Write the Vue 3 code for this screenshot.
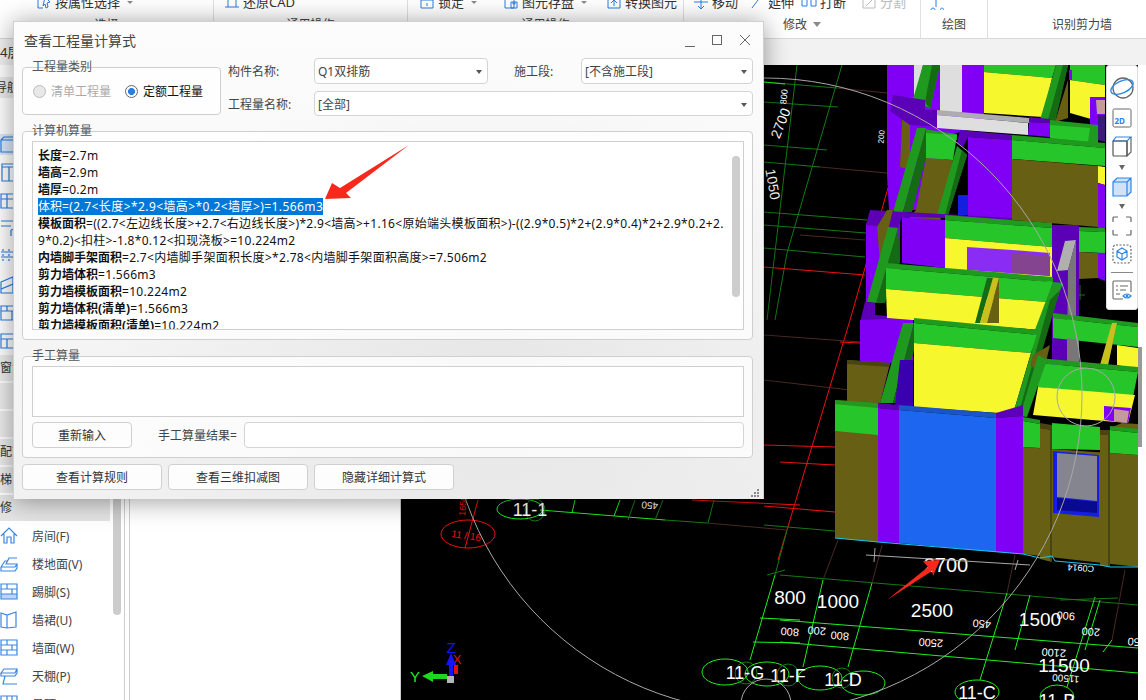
<script setup>
const sections = [
  { w: 214, title: '选择', cls: 'p1', tools: [{ t: '按属性选择', caret: true, ic: 'M2 2h5M2 2v12h5M9 3l5 5-3 1 1 4-2 1-1-4-2 2z' }] },
  { w: 194, title: '通用操作', cls: 'p2', tools: [{ t: '还原CAD', ic: 'M1 4h14M4 1v12M1 13h14M12 4v9' }] },
  { w: 276, title: '通用操作', cls: 'p3', tools: [
    { t: '锁定', caret: true, ic: 'M2 6h12v8H2zM5 6V3h6v3M8 9v3' },
    { t: '图元存盘', caret: true, ic: 'M2 2h9v12H2zM8 8h6v6H8zM10 8v2h2V8' },
    { t: '转换图元', ic: 'M2 4h12v10H2zM5 9l3-3 3 3M8 6v6' }
  ] },
  { w: 237, title: '修改', cls: 'p4', caret: true, tools: [
    { t: '移动', ic: 'M8 1v14M5 12l3 3 3-3M5 4l3-3 3 3M1 8h14' },
    { t: '延伸', ic: 'M3 14 12 2M12 2h3' },
    { t: '打断', ic: 'M1 4h5v8H1zM10 4h5v8h-5z' },
    { t: '分割', ic: 'M2 3h12v11H2zM5 12l7-7', off: true }
  ] },
  { w: 67, title: '绘图', cls: 'p5', tools: [{ t: '', ic: 'M3 14a2 2 0 1 0 .1 0M6 13V2M12 14a1.5 1.5 0 1 0 .1 0' }] },
  { w: 158, title: '识别剪力墙', cls: 'p6', tools: [] }
]

const iconRows = [
  'M1 5 4 2h13v15H1zM1 5h16',
  'M2 1h14v17H2zM2 4h14M9 4v14',
  'M1 3h16v14H1zM1 8h16M7 3v14',
  'M1 2h14v8l-4 1M1 7h10M11 11v6',
  'M3 2v2M3 7v2M3 12v2M9 2v2M9 7v2M9 12v2M1 5h16M1 10h16',
  'M1 7l12-5v7L1 14zM1 14v4h12V9',
  'M1 3h16v14H1zM1 8h16M7 3v5M12 8v9',
  'M1 3h16v14H1zM1 8h16M7 8v9'
]
const groupRows = [
  { t: '门窗洞' }, { t: '' }, { t: '' }, { t: '装配式' }, { t: '楼梯' }, { t: '装修', on: true }
]
const items = [
  { t: '房间(F)', d: 'M1 10 9 2l8 8M4 8v9h3v-6h4v6h3V8' },
  { t: '楼地面(V)', d: 'M1 13h14l2-3H6L9 4h8M1 13v4h14l2-3v-4M1 13l4-6h2' },
  { t: '踢脚(S)', d: 'M1 2h16v15H1zM1 7h16M1 12h16M7 2v5M12 7v5', fill: true },
  { t: '墙裙(U)', d: 'M1 3l6 2 9-3v15l-9 1-6-1zM7 5v13' },
  { t: '墙面(W)', d: 'M1 2h16v15H1zM1 7h16M1 12h16M7 2v5M12 7v5M7 12v5' },
  { t: '天棚(P)', d: 'M1 7l3-4h13l-2 4zM1 7v3h14l2-3V3M5 10l-2 8h14' },
  { t: '吊顶(K)', d: 'M1 2h16v15H1zM1 7h16M7 2v5M12 2v5' }
]

const calcLines = [
  { k: '长度', v: '=2.7m' },
  { k: '墙高', v: '=2.9m' },
  { k: '墙厚', v: '=0.2m' },
  { k: '体积', v: '=(2.7<长度>*2.9<墙高>*0.2<墙厚>)=1.566m3', sel: true },
  { k: '模板面积', v: '=((2.7<左边线长度>+2.7<右边线长度>)*2.9<墙高>+1.16<原始端头模板面积>)-((2.9*0.5)*2+(2.9*0.4)*2+2.9*0.2+2.' },
  { k: '', v: '9*0.2)<扣柱>-1.8*0.12<扣现浇板>=10.224m2' },
  { k: '内墙脚手架面积', v: '=2.7<内墙脚手架面积长度>*2.78<内墙脚手架面积高度>=7.506m2' },
  { k: '剪力墙体积', v: '=1.566m3' },
  { k: '剪力墙模板面积', v: '=10.224m2' },
  { k: '剪力墙体积(清单)', v: '=1.566m3' },
  { k: '剪力墙模板面积(清单)', v: '=10.224m2' }
]

const G = '#26c62a', GD = '#1f9a1f', GK = '#146b14', Y = '#f7f72e', O = '#665f14', OD = '#4a4510'
const P = '#7f00f5', PD = '#5c00b8', W = '#dedede'

// page coordinates, painted back to front
const polys = [
  [P, '887,65 984,65 984,125 950,135 930,210 889,210 887,176'],
  [W, '914,65 923,65 915,98 914,98'],
  [O, '903,98 915,97 915,125 910,125 910,170 900,167'],
  [GD, '923,65 940,65 930,109 913,99'],
  [GK, '932,65 940,65 930,109 925,102'],
  [W, '940,65 962,65 962,112 940,112'],
  [G, '984,65 1056,65 1052,78 984,72'],
  [Y, '984,72 1052,78 1043,117 984,113'],
  [GD, '1056,65 1068,65 1055,122 1040,120'],
  [GK, '1063,65 1068,65 1055,122 1048,120'],
  [O, '1068,80 1068,118 1055,122'],
  [G, '1070,65 1105,65 1105,85 1070,80'],
  [Y, '1070,80 1105,85 1105,123 1070,113'],
  [P, '1069,70 1072,70 1072,80 1069,80'],
  [P, '1090,97 1105,97 1105,140 1090,135'],
  ['#c49a9a', '1096,100 1105,100 1105,114 1097,114'],
  ['#3a1a7a', '1098,115 1105,115 1105,142 1098,140'],
  [PD, '893,95 925,100 925,110 938,110 938,127 910,125 890,111'],
  ['#adadad', '937,110 1029,118 1029,123 937,115'],
  [W, '937,115 1028,123 1028,135 937,128'],
  [PD, '1029,117 1050,119 1050,123 1029,122'],
  [P, '1029,122 1050,123 1050,137 1028,135'],
  [GD, '1050,120 1098,125 1098,145 1050,140'],
  [G, '1050,125 1090,128 1088,142 1050,138'],
  [PD, '960,130 1012,135 1012,140 968,137 963,147 957,143'],
  [P, '968,137 1012,140 1012,225 968,222'],
  [GD, '1012,135 1105,143 1105,148 1012,140'],
  [G, '1012,140 1105,148 1105,166 1012,159'],
  [O, '1012,159 1098,166 1098,227 1012,220'],
  [Y, '1098,166 1105,167 1105,185 1098,183'],
  [P, '1098,183 1105,185 1105,281 1098,278'],
  [O, '916,210 926,158 953,160 940,222 905,222'],
  [GD, '917,128 957,134 957,140 926,133 926,158 916,158'],
  [G, '926,133 957,135 953,160 926,158'],
  [GD, '917,128 926,128 903,212 893,212'],
  [GK, '926,128 926,157 912,212 903,212'],
  [GD, '957,146 967,155 948,215 937,215'],
  [GK, '962,150 967,155 948,215 945,215'],
  ['#1420e0', '958,195 968,195 968,215 958,215'],
  [P, '866,223 900,213 900,263 887,263 877,303 866,302'],
  [PD, '870,210 1012,218 1012,222 945,218 902,217 898,228 866,225'],
  [O, '877,227 887,210 893,210 880,263'],
  [P, '902,217 945,220 945,268 902,263'],
  [GD, '945,215 1052,223 1052,228 945,220'],
  [G, '945,220 1052,228 1052,247 945,238'],
  [Y, '945,238 1052,247 1052,282 945,270'],
  ['#8b2cf5', '967,247 1012,250 1050,253 1050,276 967,270'],
  ['#84448f', '1012,253 1050,256 1050,276 1012,273'],
  [PD, '1052,225 1079,225 1079,365 1052,365'],
  ['#b0b0b0', '1065,241 1076,240 1068,270 1057,271'],
  ['#777777', '1068,270 1076,240 1076,363 1067,363'],
  [GD, '1079,227 1105,228 1105,232 1079,231'],
  [G, '1079,231 1105,232 1105,253 1079,252'],
  [O, '1079,252 1098,253 1098,278 1079,279'],
  [GD, '888,227 898,228 880,303 867,302'],
  [GK, '898,228 900,262 885,303 876,303'],
  [PD, '865,302 875,303 875,315 913,318 913,322 860,322'],
  [P, '860,320 913,318 913,360 890,363 880,403 860,403'],
  [GD, '886,263 1053,277 1053,282 886,268'],
  [G, '886,268 1053,282 1047,302 886,289'],
  [Y, '886,289 1047,302 1040,330 887,318'],
  [GK, '987,278 993,278 980,323 975,323'],
  ['#c9c020', '993,278 999,278 987,323 980,323'],
  [O, '999,278 999,323 987,323'],
  [GD, '1053,282 1063,283 1043,335 1033,335'],
  [O, '847,360 890,363 880,403 847,402'],
  [OD, '847,360 890,363 889,367 847,364'],
  [GD, '903,323 914,323 893,403 880,403'],
  [GK, '914,323 914,350 900,403 893,403'],
  ['#3a00b0', '900,360 913,360 913,407 895,405'],
  [GD, '914,318 1038,330 1038,335 914,323'],
  [G, '914,323 1038,335 1031,353 914,343'],
  [Y, '914,343 1031,353 1013,414 914,407'],
  [GD, '1038,330 1053,282 1060,290 1020,416 1013,414'],
  [GK, '1050,300 1060,290 1023,416 1018,416'],
  [GD, '1053,313 1138,323 1138,327 1053,318'],
  [G, '1053,318 1138,327 1138,347 1053,338'],
  [O, '1100,365 1117,323 1108,365'],
  ['#c9c020', '1112,323 1117,323 1108,365 1100,365'],
  [Y, '1117,345 1138,348 1138,370 1117,365'],
  ['#777777', '1067,338 1079,340 1079,365 1067,365'],
  [O, '1033,355 1050,345 1043,375 1030,365'],
  [GD, '1038,358 1138,367 1138,372 1038,363'],
  [G, '1038,363 1138,372 1133,397 1038,387'],
  [Y, '1038,387 1135,395 1128,423 1033,415'],
  [P, '1104,406 1131,408 1128,423 1104,420'],
  ['#c49a9a', '1114,409 1129,411 1127,423 1114,421'],
  [GD, '1038,355 1047,360 1027,417 1020,416'],
  [O, '1122,423 1138,424 1138,432 1110,428'],
  [O, '835,400 878,403 878,542 835,538'],
  [GD, '835,400 878,403 878,408 835,404'],
  [G, '835,404 878,408 878,435 835,431'],
  [PD, '878,403 899,405 899,410 878,408'],
  [P, '878,408 899,410 899,543 878,542'],
  ['#1a55c8', '899,405 996,413 996,418 899,410'],
  ['#1c66f0', '899,410 996,418 996,552 899,543'],
  [PD, '996,413 1023,405 1023,416 996,418'],
  [P, '996,418 1023,416 1023,554 996,552'],
  [O, '1023,447 1138,455 1138,567 1023,554'],
  [GD, '1023,417 1040,420 1040,424 1023,421'],
  [G, '1023,421 1040,424 1040,448 1023,447'],
  [G, '1052,423 1100,427 1100,450 1052,449'],
  [GD, '1110,426 1138,429 1138,433 1110,430'],
  [G, '1110,430 1138,433 1138,455 1110,453'],
  [OD, '1040,423 1052,425 1052,430 1040,428'],
  [O, '1040,428 1052,430 1052,562 1040,559'],
  [OD, '1050,430 1052,430 1052,562 1050,562'],
  [OD, '1100,430 1110,430 1110,435 1100,435'],
  [O, '1100,435 1110,435 1110,567 1100,565'],
  [OD, '1108,435 1110,435 1110,567 1108,567'],
  ['#1420e0', '1053,451 1099,455 1099,517 1053,513'],
  ['#85858f', '1057,453 1097,456 1097,501 1057,497'],
  ['#0a0a90', '1057,498 1097,502 1097,513 1057,510']
]

const dark = '#157a15', bright = '#1ef01e', brown = '#4a2a20', red = '#f01010'
const lines = [
  [dark, 764, 82, 837, 88], [brown, 837, 88, 887, 93], [bright, 764, 82, 785, 84],
  [dark, 764, 102, 838, 107], [dark, 764, 145, 827, 150],
  [dark, 764, 162, 820, 167], [brown, 820, 167, 887, 173],
  [dark, 797, 65, 767, 320], [dark, 842, 65, 787, 253], [dark, 787, 253, 775, 320],
  [dark, 764, 212, 867, 220], [dark, 764, 225, 866, 233], [brown, 800, 235, 865, 240],
  [dark, 764, 248, 865, 257], [red, 764, 267, 865, 275],
  [red, 888, 188, 850, 320], [red, 850, 320, 807, 463], [red, 807, 463, 778, 560],
  [brown, 764, 335, 860, 342], [red, 840, 342, 860, 343],
  [brown, 764, 380, 850, 390], [red, 764, 445, 835, 447], [red, 780, 462, 835, 465],
  [red, 764, 506, 835, 512], [dark, 764, 525, 835, 531], [red, 692, 500, 800, 505],
  [red, 478, 500, 465, 548],
  [bright, 540, 510, 665, 520], [dark, 665, 520, 707, 523], [brown, 707, 523, 787, 530],
  [bright, 575, 500, 572, 513], [bright, 620, 500, 614, 516], [dark, 635, 500, 628, 520], [dark, 663, 500, 655, 520],
  [dark, 714, 500, 708, 523], [dark, 787, 530, 775, 575], [bright, 775, 575, 750, 660],
  [dark, 767, 575, 785, 570], [bright, 760, 618, 800, 620], [bright, 753, 642, 800, 643],
  [dark, 780, 575, 1138, 605], [bright, 780, 620, 1138, 648], [bright, 780, 642, 1138, 673],
  [bright, 823, 580, 803, 667], [bright, 872, 583, 848, 667], [brown, 838, 540, 823, 580], [brown, 882, 545, 872, 583],
  [brown, 1015, 555, 1007, 593], [bright, 1007, 593, 980, 680], [bright, 1030, 595, 1015, 650],
  [bright, 1095, 597, 1067, 687], [bright, 1100, 600, 1085, 650], [brown, 1125, 570, 1112, 640], [bright, 1112, 640, 1103, 652],
  [dark, 1060, 600, 1118, 598], [dark, 1080, 285, 1080, 300], [dark, 1075, 295, 1085, 295],
  [bright, 1055, 350, 1053, 365], [red, 1060, 362, 1082, 364]
]

const labels = [
  { t: '2700', x: 946, y: 572, s: 20 },
  { t: '800', x: 790, y: 604, s: 19 },
  { t: '1000', x: 838, y: 608, s: 19 },
  { t: '2500', x: 932, y: 617, s: 19 },
  { t: '1500', x: 1040, y: 626, s: 19 },
  { t: '11500', x: 1064, y: 672, s: 19 },
  { t: '800', x: 790, y: 628, s: 11, r: 184 },
  { t: '200', x: 817, y: 627, s: 11, r: 184 },
  { t: '800', x: 840, y: 632, s: 11, r: 184 },
  { t: '2500', x: 931, y: 639, s: 11, r: 184 },
  { t: '450', x: 982, y: 620, s: 11, r: 184 },
  { t: '900', x: 1066, y: 612, s: 11, r: 184 },
  { t: '200', x: 1091, y: 628, s: 11, r: 184 },
  { t: '50', x: 1134, y: 638, s: 11, r: 184 },
  { t: '2100', x: 1054, y: 649, s: 11, r: 184 },
  { t: '11500', x: 1066, y: 675, s: 10, r: 184 },
  { t: 'C0914', x: 1081, y: 565, s: 9, r: 184 },
  { t: '450', x: 650, y: 502, s: 10, r: 184 },
  { t: '2700', x: 785, y: 125, s: 14, r: -68 },
  { t: '1050', x: 768, y: 185, s: 14, r: 80 },
  { t: '800', x: 787, y: 97, s: 9, r: -85 },
  { t: '200', x: 884, y: 137, s: 8, r: -85 }
]

const ovals = [
  [bright, 520, 509, 23, 10], [dark, 535, 510, 10, 11], [red, 468, 534, 27, 14],
  [bright, 725, 672, 23, 13], [dark, 746, 673, 11, 11], [bright, 767, 674, 22, 12], [dark, 788, 675, 11, 11],
  [bright, 820, 678, 22, 12], [dark, 842, 678, 10, 10], [bright, 863, 683, 22, 12], [bright, 977, 692, 22, 12], [bright, 1057, 697, 17, 12]
]
const tags = [
  { t: '11-1', x: 530, y: 516 }, { t: '11-G', x: 745, y: 679 }, { t: '11-F', x: 788, y: 682 },
  { t: '11-D', x: 843, y: 686 }, { t: '11-C', x: 977, y: 699 }, { t: '11-B', x: 1057, y: 707 }
]
</script>

<template>
  <div class="page">
    <header class="ribbon">
      <section v-for="s in sections" :key="s.cls" class="rb-sec" :class="s.cls" :style="{ width: s.w + 'px' }">
        <div class="rb-tools">
          <div v-for="tool in s.tools" :key="tool.t" class="rb-tool" :class="{ off: tool.off }">
            <svg width="16" height="16" viewBox="0 0 16 16" fill="none" :stroke="tool.off ? '#bbb' : '#2b7de0'">
              <path :d="tool.ic" />
            </svg>
            <span>{{ tool.t }}</span>
            <i v-if="tool.caret" class="caret small"></i>
          </div>
        </div>
        <div class="rb-title">{{ s.title }}<i v-if="s.caret" class="caret"></i></div>
      </section>
    </header>

    <div class="body">
      <aside class="side">
        <div class="side-list">
          <div class="floor">4层</div>
          <div class="nav">导航</div>
          <div class="side-icons">
            <div v-for="(d, n) in iconRows" :key="n" class="icon-row" :class="{ active: n === 0 }">
              <svg width="18" height="20" viewBox="0 0 18 20" fill="none" stroke="#2b7de0" stroke-width="1.2">
                <path :d="d" />
              </svg>
            </div>
          </div>
          <div v-for="(g, i) in groupRows" :key="i" class="group-row" :class="{ on: g.on }">{{ g.t }}</div>
          <div v-for="it in items" :key="it.t" class="item">
            <svg width="18" height="20" viewBox="0 0 18 20" fill="none" stroke="#3b86e0" stroke-width="1.2">
              <path v-if="it.fill" d="M1 12h16v5H1z" fill="#bcd6f5" stroke="none" />
              <path :d="it.d" />
            </svg>
            <span>{{ it.t }}</span>
          </div>
        </div>
        <div class="side-track"><div class="side-thumb"></div></div>
      </aside>
      <div class="panel"></div>
      <div class="view">
        <div class="view-strip"></div>
        <div class="view-row">
          <svg class="cad" width="737" height="635" viewBox="401 65 737 635">
            <rect x="401" y="65" width="737" height="635" fill="#000" />
            <line v-for="(l, i) in lines" :key="'l' + i" :x1="l[1]" :y1="l[2]" :x2="l[3]" :y2="l[4]" :stroke="l[0]" />
            <ellipse v-for="(o, i) in ovals" :key="'o' + i" :cx="o[1]" :cy="o[2]" :rx="o[3]" :ry="o[4]" :stroke="o[0]" fill="none" />
            <text v-for="(t, i) in labels" :key="'t' + i" class="cad-num" :font-size="t.s" :x="t.x" :y="t.y"
              :transform="t.r ? `rotate(${t.r} ${t.x} ${t.y})` : null">{{ t.t }}</text>
            <text v-for="t in tags" :key="t.t" class="cad-num" font-size="18" :x="t.x" :y="t.y">{{ t.t }}</text>
            <text class="cad-red" font-size="10" x="451" y="537" transform="rotate(8 451 537)">11 / 16</text>
            <text class="cad-red" font-size="9" x="465" y="516" transform="rotate(-85 465 516)">1650</text>
            <polygon v-for="(p, i) in polys" :key="'p' + i" :fill="p[0]" :points="p[1]" />
            <polyline points="835,538 878,542 1023,554 1040,558 1052,556 1055,561 1100,565 1110,567 1138,567" fill="none" stroke="#19c8f0" />
            <circle cx="765" cy="395" r="317" fill="none" stroke="#a8a8a8" />
            <circle cx="1086" cy="397" r="29" fill="none" stroke="#a8a8a8" />
            <circle cx="766" cy="704" r="25" fill="none" stroke="#a8a8a8" />
            <path d="M866 555 L1030 565 M875 548 L874 562 M1018 560 L1015 570" stroke="#a8a8a8" fill="none" />
            <g class="axes">
              <text x="451" y="653" fill="#1414ff" font-size="15" text-anchor="middle">Z</text>
              <text x="457" y="664" fill="#e01010" font-size="13" text-anchor="middle">X</text>
              <text x="415" y="682" fill="#1ef01e" font-size="15" text-anchor="middle">Y</text>
              <path d="M451 653l5 12h-3v11h-4v-11h-3z" fill="#1414ff" />
              <path d="M454 665h4v9h-4z" fill="#e01010" />
              <path d="M422 676l11-5v3h14v5h-14v3z" fill="#1ed81e" />
              <rect x="447" y="676" width="7" height="7" fill="#b5b5b5" />
            </g>
            <polygon points="940,560 923,561 928,567 887,600 932,571 933,576" fill="#f8291c" />
          </svg>
          <div class="view-scroll"><div class="view-thumb"></div></div>
        </div>
      </div>
    </div>

    <div class="toolbar">
      <svg width="26" height="24" viewBox="0 0 26 24" fill="none" stroke-width="1.3">
        <circle cx="14" cy="12" r="10" stroke="#666" />
        <ellipse cx="13" cy="11" rx="12" ry="6" transform="rotate(-25 13 11)" stroke="#2b86e8" />
      </svg>
      <svg width="20" height="22" viewBox="0 0 20 22" fill="none">
        <rect x="1" y="2" width="18" height="18" rx="1.5" stroke="#666" />
        <text x="2.5" y="17" class="two-d">2D</text>
      </svg>
      <svg width="20" height="22" viewBox="0 0 20 22" fill="none" stroke-width="1.2">
        <path d="M4 1h15l-4 4H1z" stroke="#2b86e8" />
        <path d="M19 1v15l-4 4V5" stroke="#666" />
        <rect x="1" y="5" width="14" height="15" rx="1" stroke="#555" />
      </svg>
      <i class="tb-caret"></i>
      <svg width="20" height="20" viewBox="0 0 20 20" stroke="#2b86e8" stroke-width="1.2" fill="#cfe2fa">
        <path d="M1 5 5 1h14v14l-4 4H1zM1 5h14v14M15 5l4-4" />
      </svg>
      <i class="tb-caret"></i>
      <svg width="20" height="20" viewBox="0 0 20 20" fill="none" stroke="#666" stroke-width="1.2">
        <path d="M1 6V2a1 1 0 0 1 1-1h4M14 1h4a1 1 0 0 1 1 1v4M19 14v4a1 1 0 0 1-1 1h-4M6 19H2a1 1 0 0 1-1-1v-4" />
      </svg>
      <svg width="20" height="22" viewBox="0 0 20 22" fill="none" stroke-width="1.2">
        <rect x="1" y="2" width="18" height="18" rx="3" stroke="#666" stroke-dasharray="2 1.5" />
        <path d="M10 5l5 3v6l-5 3-5-3V8zM5 8l5 3 5-3M10 11v6" stroke="#2b86e8" />
      </svg>
      <div class="tb-div"></div>
      <svg width="20" height="20" viewBox="0 0 20 20" fill="none" stroke-width="1.1">
        <path d="M11 19H2a1 1 0 0 1-1-1V2a1 1 0 0 1 1-1h16a1 1 0 0 1 1 1v10" stroke="#666" />
        <path d="M4 6h2M8 6h8M4 10h2M8 10h6M4 14h4" stroke="#666" />
        <path d="M11 16q4-4 8 0q-4 4-8 0z" stroke="#2b86e8" />
        <circle cx="15" cy="16" r="1.3" fill="#2b86e8" />
      </svg>
    </div>

    <div class="dialog">
      <div class="dlg-head">
        <span class="dlg-title">查看工程量计算式</span>
        <div class="dlg-btns">
          <i class="btn-min"></i>
          <i class="btn-max"></i>
          <svg width="12" height="12" viewBox="0 0 12 12" stroke="#666" fill="none"><path d="M1 1l10 10M11 1 1 11" /></svg>
        </div>
      </div>

      <div class="top">
        <div class="box qty-type">
          <span class="legend">工程量类别</span>
          <label class="radio disabled"><i></i>清单工程量</label>
          <label class="radio checked"><i></i>定额工程量</label>
        </div>
        <div class="form">
          <span class="lbl">构件名称:</span>
          <div class="select">Q1双排筋<i class="arrow"></i></div>
          <span class="lbl lbl-seg">施工段:</span>
          <div class="select">[不含施工段]<i class="arrow"></i></div>
          <span class="lbl">工程量名称:</span>
          <div class="select wide">[全部]<i class="arrow"></i></div>
        </div>
      </div>

      <div class="box calc">
        <span class="legend">计算机算量</span>
        <div class="calc-text">
          <div v-for="(l, i) in calcLines" :key="i" class="line">
            <span :class="{ sel: l.sel }"><b>{{ l.k }}</b><span class="val">{{ l.v }}</span></span>
          </div>
          <div class="calc-thumb"></div>
        </div>
      </div>

      <div class="box manual">
        <span class="legend">手工算量</span>
        <div class="manual-area"></div>
        <div class="manual-row">
          <button class="btn retype">重新输入</button>
          <span class="res-lbl">手工算量结果=</span>
          <div class="res-input"></div>
        </div>
      </div>

      <div class="foot">
        <button class="btn">查看计算规则</button>
        <button class="btn">查看三维扣减图</button>
        <button class="btn">隐藏详细计算式</button>
      </div>

      <svg class="grip" width="9" height="8" viewBox="0 0 9 8" fill="#8a8a8a">
        <rect x="6" y="0" width="2" height="2" /><rect x="3" y="3" width="2" height="2" /><rect x="6" y="3" width="2" height="2" />
        <rect x="0" y="6" width="2" height="2" /><rect x="3" y="6" width="2" height="2" /><rect x="6" y="6" width="2" height="2" />
      </svg>
    </div>

    <svg class="pointer" width="90" height="60" viewBox="322 142 90 60">
      <polygon points="325,199 332,183 340,188 409,145 346,193 351,198" fill="#f8291c" />
    </svg>
  </div>
</template>

<style scoped>
.page {
  position: relative;
  width: 1146px;
  height: 700px;
  overflow: hidden;
  background: #fff;
  color: #333;
  font-family: "Noto Sans", "Noto Sans CJK SC", sans-serif;
  font-size: 12px;
}

.ribbon {
  display: flex;
  height: 38px;
  border-bottom: 1px solid #d9d9d9;
  overflow: hidden;
  background: #fff;
}

.rb-sec {
  flex: none;
  display: flex;
  flex-direction: column;
  box-sizing: border-box;
  height: 38px;
  border-right: 1px solid #e0e0e0;
}

.p6 {
  border-right: 0;
}

.rb-tools {
  display: flex;
  height: 16px;
  margin-top: -6px;
  font-size: 13px;
  line-height: 16px;
}

.rb-tool {
  display: flex;
  align-items: center;
  gap: 3px;
  white-space: nowrap;
}

.rb-tool.off {
  color: #bbb;
}

.rb-title {
  margin-top: 7px;
  line-height: 16px;
  text-align: center;
  color: #444;
}

.p1 .rb-tools { padding-left: 36px; }
.p2 .rb-tools { padding-left: 10px; }
.p3 .rb-tools { padding-left: 11px; gap: 26px; }
.p3 .rb-tool:last-child { margin-left: -7px; }
.p4 .rb-tools { padding-left: 9px; gap: 11px; }
.p4 .rb-tool:nth-child(3) { margin-left: -4px; }
.p4 .rb-tool:nth-child(4) { margin-left: 4px; }
.p5 .rb-tools { padding-left: 9px; }
.p6 .rb-title { padding-left: 30px; }

.caret {
  display: inline-block;
  margin-left: 6px;
  border: 4px solid transparent;
  border-top: 5px solid #8a8a8a;
  border-bottom: 0;
  vertical-align: 2px;
}

.caret.small {
  border-width: 3px 3px 0;
  margin-left: 4px;
}

.body {
  display: flex;
  height: 661px;
}

.side {
  flex: none;
  display: flex;
  width: 124px;
  border-right: 1px solid #ccc;
}

.side-list {
  width: 110px;
  overflow: hidden;
}

.floor {
  height: 26px;
  line-height: 26px;
  font-size: 13px;
  background: #f2f2f2;
}

.nav {
  height: 21px;
  margin-top: 12px;
  text-indent: -5px;
  line-height: 21px;
  background: #ebebeb;
}

.side-icons {
  margin-top: 33px;
}

.icon-row {
  display: flex;
  align-items: center;
  height: 28px;
}

.icon-row.active {
  background: linear-gradient(#fff 3px, #dbe8f7 3px, #dbe8f7 24px, #fff 24px);
}

.group-row {
  box-sizing: border-box;
  height: 28px;
  border-bottom: 2px solid #fff;
  background: #ececec;
  text-indent: -12px;
  line-height: 26px;
}

.group-row.on {
  background: #e4e4e4;
}

.item {
  display: flex;
  align-items: center;
  gap: 14px;
  height: 28px;
  margin-top: -1px;
  margin-bottom: 1px;
  white-space: nowrap;
  color: #444;
}

.side-track {
  width: 11px;
  padding-left: 3px;
}

.side-thumb {
  width: 8px;
  height: 576px;
  border-radius: 4px;
  background: #ccc;
}

.panel {
  flex: none;
  width: 272px;
  box-sizing: border-box;
  margin-left: 4px;
  border-left: 1px solid #ccc;
  border-right: 1px solid #ccc;
}

.view {
  flex: 1;
  display: flex;
  flex-direction: column;
}

.view-strip {
  height: 26px;
  background: #f2f2f2;
}

.view-row {
  display: flex;
}

.cad {
  display: block;
  flex: none;
}

.view-scroll {
  flex: 1;
  padding-top: 282px;
}

.view-thumb {
  width: 4px;
  height: 100px;
  background: #999;
}

.cad-num {
  fill: #fff;
  font-family: "Liberation Sans", sans-serif;
  text-anchor: middle;
}

.cad-red {
  fill: #f01010;
  font-family: "Liberation Sans", sans-serif;
}

.axes text {
  font-family: "Liberation Sans", sans-serif;
}

.toolbar {
  position: absolute;
  left: 1106px;
  top: 65px;
  box-sizing: border-box;
  display: flex;
  flex-direction: column;
  align-items: center;
  gap: 7px;
  width: 32px;
  height: 245px;
  padding-top: 10px;
  border: 1px solid #ddd;
  border-radius: 3px;
  background: #fff;
}

.two-d {
  font-family: "Noto Sans", sans-serif;
  font-size: 8px;
  font-weight: 700;
  fill: #2b86e8;
}

.tb-caret {
  width: 0;
  height: 0;
  border: 3.5px solid transparent;
  border-top: 5px solid #666;
  border-bottom: 0;
}

.tb-div {
  width: 22px;
  height: 1px;
  background: #888;
}

.dialog {
  position: absolute;
  left: 13px;
  top: 21px;
  box-sizing: border-box;
  width: 751px;
  height: 478px;
  padding: 0 10px 0 8px;
  background:
    radial-gradient(ellipse at 480px 370px, #e6e6e6, transparent 60%),
    linear-gradient(#fcfcfc, #f1f1f1);
  border: 1px solid #d0d0d0;
  border-width: 1px 1px 0 1px;
  box-shadow: 0 2px 24px rgba(0, 0, 0, 0.4);
  display: flex;
  flex-direction: column;
}

.dlg-head {
  display: flex;
  align-items: center;
  justify-content: space-between;
  height: 36px;
}

.dlg-title {
  padding-left: 2px;
  font-size: 14px;
  color: #444;
}

.dlg-btns {
  display: flex;
  align-items: center;
  gap: 17px;
  margin-right: 2px;
  height: 12px;
}

.btn-min {
  align-self: flex-end;
  width: 10px;
  height: 1px;
  margin-bottom: -1px;
  background: #666;
}

.btn-max {
  box-sizing: border-box;
  width: 10px;
  height: 10px;
  border: 1px solid #666;
}

.top {
  display: flex;
  gap: 7px;
}

.box {
  position: relative;
  box-sizing: border-box;
  border: 1px solid #cfcfcf;
  border-radius: 4px;
  background: rgba(255, 255, 255, 0.75);
}

.legend {
  position: absolute;
  left: 9px;
  top: -9px;
  line-height: 16px;
  color: #555;
}

.qty-type {
  flex: none;
  display: flex;
  align-items: center;
  gap: 14px;
  width: 199px;
  height: 48px;
  margin-top: 9px;
  padding: 0 10px;
}

.radio {
  display: flex;
  align-items: center;
  gap: 5px;
  color: #111;
  white-space: nowrap;
}

.radio i {
  box-sizing: border-box;
  width: 13px;
  height: 13px;
  border: 1px solid #777;
  border-radius: 50%;
  background: #fff;
}

.radio.disabled {
  color: #aaa;
}

.radio.disabled i {
  border-color: #bbb;
  background: #e8e8e8;
}

.radio.checked i {
  border-color: #666;
  background: radial-gradient(circle, #2a7fe0 0 3.2px, #fff 3.8px);
}

.form {
  flex: 1;
  display: grid;
  grid-template-columns: 86px 174px 93px 1fr;
  grid-template-rows: 26px 25px;
  row-gap: 7px;
  align-items: center;
}

.lbl {
  color: #444;
  white-space: nowrap;
}

.lbl-seg {
  padding-left: 26px;
}

.select {
  position: relative;
  box-sizing: border-box;
  height: 100%;
  display: flex;
  align-items: center;
  padding-left: 3px;
  border: 1px solid #d4d4d4;
  border-radius: 4px;
  background: #fff;
  color: #444;
}

.select.wide {
  grid-column: 2 / 5;
}

.arrow {
  position: absolute;
  right: 5px;
  top: 11px;
  border: 3px solid transparent;
  border-top: 4px solid #555;
  border-bottom: 0;
}

.calc {
  height: 209px;
  margin-top: 15px;
  padding: 9px 8px 9px 9px;
}

.calc-text {
  position: relative;
  box-sizing: border-box;
  height: 189px;
  padding: 5px 0 0 5px;
  border: 1px solid #cfcfcf;
  background: #fff;
  overflow: hidden;
  line-height: 17px;
  color: #111;
}

.line {
  height: 17px;
  white-space: nowrap;
}

.line b {
  font-weight: 700;
}

.val {
  letter-spacing: 0.3px;
}

.line .sel {
  display: inline-block;
  background: #0078d7;
  color: #fff;
}

.line .sel .val {
  letter-spacing: 0.42px;
}

.line .sel b {
  font-weight: 400;
}

.calc-thumb {
  position: absolute;
  right: 3px;
  top: 14px;
  width: 8px;
  height: 141px;
  border-radius: 4px;
  background: #cdcdcd;
}

.manual {
  height: 102px;
  margin-top: 16px;
  padding: 9px 8px 9px 9px;
}

.manual-area {
  box-sizing: border-box;
  height: 51px;
  border: 1px solid #cfcfcf;
  background: #fff;
}

.manual-row {
  display: flex;
  align-items: center;
  height: 26px;
  margin-top: 5px;
}

.btn {
  box-sizing: border-box;
  width: 140px;
  height: 26px;
  padding: 0;
  border: 1px solid #d0d0d0;
  border-radius: 4px;
  background: #fdfdfd;
  color: #333;
  font: inherit;
}

.retype {
  flex: none;
  width: 100px;
}

.res-lbl {
  margin-left: 26px;
  width: 86px;
  color: #444;
  white-space: nowrap;
}

.res-input {
  flex: 1;
  height: 26px;
  box-sizing: border-box;
  border: 1px solid #d4d4d4;
  border-radius: 4px;
  background: #fff;
}

.foot {
  display: flex;
  gap: 6px;
  margin-top: 6px;
}

.grip {
  position: absolute;
  right: 3px;
  bottom: 2px;
}

.pointer {
  position: absolute;
  left: 322px;
  top: 142px;
}
</style>

<style>
html, body {
  margin: 0;
  overflow: hidden;
}
</style>
